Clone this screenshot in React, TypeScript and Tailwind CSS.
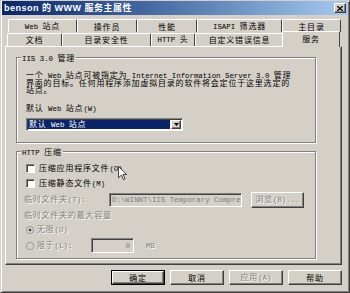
import React from "react";

// latin runs in the dialog font are half-width, monospaced
const M = ({ children }: { children: React.ReactNode }) => (
  <span className="font-['Liberation_Mono',monospace] text-[7.4px] leading-none tracking-normal">
    {children}
  </span>
);

const raised =
  "border border-t-white border-l-white border-r-[#404040] border-b-[#404040] shadow-[inset_-1px_-1px_0_#808080]";
const sunken =
  "border border-t-[#808080] border-l-[#808080] border-r-white border-b-white shadow-[inset_1px_1px_0_#404040]";
const gray = "text-[#808080] [text-shadow:1px_1px_0_#fff]";

const row1: { label: React.ReactNode; w: string }[] = [
  { label: <><M>Web </M>站点</>, w: "w-[69px]" },
  { label: "操作员", w: "w-[60px]" },
  { label: "性能", w: "w-[60px]" },
  { label: <><M>ISAPI </M>筛选器</>, w: "w-[85px]" },
  { label: "主目录", w: "w-[59px]" },
];

const row2: { label: React.ReactNode; w: string }[] = [
  { label: "文档", w: "w-[55px]" },
  { label: "目录安全性", w: "w-[89px]" },
  { label: <><M>HTTP </M>头</>, w: "w-[44px]" },
  { label: "自定义错误信息", w: "w-[89px]" },
];

const Radio = ({ checked }: { checked?: boolean }) => (
  <svg width="8" height="8" viewBox="0 0 12 12" className="shrink-0">
    <circle cx="6" cy="6" r="5.5" fill="#d4d0c8" stroke="#808080" />
    {checked && <circle cx="6" cy="6" r="2" fill="#404040" />}
  </svg>
);

const Checkbox = () => <div className={`h-[9px] w-[9px] shrink-0 bg-white ${sunken}`} />;

const App = () => {
  return (
    <div className="relative flex h-[293px] w-[350px] flex-col overflow-hidden border border-t-[#d4d0c8] border-l-[#d4d0c8] border-r-[#404040] border-b-[#404040] bg-[#d4d0c8] px-[1px] font-['Noto_Sans_CJK_SC',sans-serif] text-[8px] leading-[8px] tracking-[0.8px] text-black shadow-[inset_1px_1px_0_#fff,inset_-1px_-1px_0_#808080]">
      {/* title bar */}
      <div className="flex h-[14px] shrink-0 items-center justify-between bg-gradient-to-r from-[#0a246a] to-[#a6caf0] pr-[2px] pl-[2px]">
        <span className="font-['Liberation_Sans','Noto_Sans_CJK_SC',sans-serif] text-[9px] leading-[10px] font-bold tracking-[0.5px] whitespace-pre text-white">
          benson 的 WWW 服务主属性
        </span>
        <div className={`flex h-[10px] w-[12px] items-center justify-center bg-[#d4d0c8] ${raised}`}>
          <svg width="6" height="5" viewBox="0 0 6 5">
            <path d="M0 0L6 5M6 0L0 5" stroke="#000" strokeWidth="1.3" />
          </svg>
        </div>
      </div>

      {/* tabs + page */}
      <div className="mt-[4px] ml-[3px] w-[337px] shrink-0">
        <div className="flex h-[13px] pl-[3px]">
          {row1.map((t, i) => (
            <div
              key={i}
              className={`${t.w} flex items-center justify-center rounded-t-[2px] border-t border-l border-r border-t-white border-l-white border-r-[#404040] pt-[1px]`}
            >
              <span className="whitespace-pre">{t.label}</span>
            </div>
          ))}
        </div>
        <div className="flex h-[14px] items-end pl-[2px]">
          {row2.map((t, i) => (
            <div
              key={i}
              className={`${t.w} flex h-[13px] items-center justify-center rounded-t-[2px] border-t border-l border-r border-t-white border-l-white border-r-[#404040]`}
            >
              <span className="whitespace-pre">{t.label}</span>
            </div>
          ))}
          <div className="relative z-10 -mb-[1px] ml-[-2px] flex h-[16px] w-[58px] items-center justify-center rounded-t-[2px] border-t border-l border-r border-t-white border-l-white border-r-[#404040] bg-[#d4d0c8] pb-[2px]">
            服务
          </div>
        </div>

        <div className={`h-[219px] ${raised}`}>
          {/* IIS 3.0 */}
          <fieldset className="mt-[6px] ml-[10px] w-[300px] border border-[#808080] shadow-[inset_1px_1px_0_#fff,1px_1px_0_#fff]">
            <legend className="ml-[4px] h-[9px] bg-[#d4d0c8] px-[1px] leading-[9px] whitespace-pre">
              <M>IIS 3.0 </M>管理
            </legend>
            <div className="pt-[9px] pb-[11px] pl-[9px]">
              <div className="h-[7.5px] leading-[7.5px] whitespace-pre">
                一个<M> Web </M>站点可被指定为<M> Internet Information Server 3.0 </M>管理
              </div>
              <div className="h-[7.5px] leading-[7.5px] whitespace-nowrap">
                界面的目标。任何用程序添加虚拟目录的软件将会定位于这里选定的
              </div>
              <div className="h-[7.5px] leading-[7.5px]">站点。</div>
              <div className="mt-[10.5px] h-[8px] whitespace-pre">
                默认<M> Web </M>站点<M>(W)</M>
              </div>
              <div className={`mt-[6px] flex h-[13px] w-[157px] bg-white p-[1px] ${sunken}`}>
                <div className="flex flex-1 items-center bg-[#0a246a] pl-[1px] text-white">
                  <span className="whitespace-pre">
                    默认<M> Web </M>站点
                  </span>
                </div>
                <div className={`ml-[1px] flex w-[10px] items-center justify-center bg-[#d4d0c8] ${raised}`}>
                  <svg width="5" height="3" viewBox="0 0 5 3">
                    <path d="M0 0H5L2.5 3Z" fill="#000" />
                  </svg>
                </div>
              </div>
            </div>
          </fieldset>

          {/* HTTP compression */}
          <fieldset className="mt-[4px] ml-[10px] w-[300px] border border-[#808080] shadow-[inset_1px_1px_0_#fff,1px_1px_0_#fff]">
            <legend className="ml-[4px] h-[9px] bg-[#d4d0c8] px-[1px] leading-[9px] whitespace-pre">
              <M>HTTP </M>压缩
            </legend>
            <div className="pt-[8px] pb-[5px] pl-[9px]">
              <div className="flex h-[9px] items-center gap-[4px]">
                <Checkbox />
                <span>
                  压缩应用程序文件<M>(O)</M>
                </span>
              </div>
              <div className="mt-[6px] flex h-[9px] items-center gap-[4px]">
                <Checkbox />
                <span>
                  压缩静态文件<M>(M)</M>
                </span>
              </div>
              <div className="mt-[4px] flex h-[16px] items-center">
                <span className={`-ml-[2px] w-[83px] ${gray}`}>
                  临时文件夹<M>(T):</M>
                </span>
                <div className={`ml-[2px] flex h-[14px] w-[133px] items-center overflow-hidden bg-[#d4d0c8] pl-[2px] whitespace-nowrap ${sunken}`}>
                  <span className="text-[#808080]">
                    <M>D:\WINNT\IIS Temporary Compressed Files</M>
                  </span>
                </div>
                <div className={`ml-[9px] flex h-[16px] w-[53px] items-center justify-center bg-[#d4d0c8] ${raised} ${gray}`}>
                  <span>
                    浏览<M>(B)...</M>
                  </span>
                </div>
              </div>
              <div className={`mt-[3px] -ml-[2px] h-[8px] ${gray}`}>临时文件夹的最大容量</div>
              <div className="mt-[7px] flex h-[8px] items-center gap-[3px]">
                <Radio checked />
                <span className={gray}>
                  无限<M>(U)</M>
                </span>
              </div>
              <div className="mt-[4px] flex h-[15px] items-center">
                <Radio />
                <span className={`ml-[3px] w-[54px] ${gray}`}>
                  限于<M>(L):</M>
                </span>
                <div className={`flex h-[15px] w-[43px] items-center justify-end bg-[#d4d0c8] pr-[3px] ${sunken}`}>
                  <span className="text-[#808080]">
                    <M>0</M>
                  </span>
                </div>
                <span className={`ml-[12px] ${gray}`}>
                  <M>MB</M>
                </span>
              </div>
            </div>
          </fieldset>
        </div>
      </div>

      {/* dialog buttons */}
      <div className="mt-[5px] ml-[3px] flex w-[337px] shrink-0 justify-end gap-[5px]">
        <div className="h-[15px] w-[54px] border border-black">
          <div className={`flex h-full items-center justify-center ${raised}`}>确定</div>
        </div>
        <div className={`flex h-[15px] w-[54px] items-center justify-center ${raised}`}>取消</div>
        <div className={`flex h-[15px] w-[54px] items-center justify-center ${raised} ${gray}`}>
          <span>
            应用<M>(A)</M>
          </span>
        </div>
        <div className={`flex h-[15px] w-[54px] items-center justify-center ${raised}`}>帮助</div>
      </div>

      {/* mouse pointer over the first checkbox label */}
      <svg
        className="absolute top-[165px] left-[117px]"
        width="9"
        height="14"
        viewBox="0 0 12 19"
      >
        <path d="M0.5 0.5V16L4.5 12.3L7.3 18.5L9.5 17.5L6.8 11.5H11.5Z" fill="#fff" stroke="#000" />
      </svg>
    </div>
  );
};

export default App;
